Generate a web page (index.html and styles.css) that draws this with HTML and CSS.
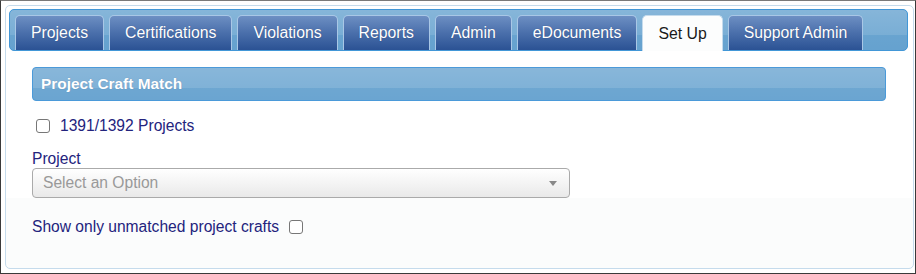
FILE: index.html
```html
<!DOCTYPE html>
<html lang="en">
<head>
<meta charset="utf-8">
<title>Project Craft Match</title>
<link rel="stylesheet" href="styles.css">
</head>
<body>
<div class="frame">
  <div class="tabs">
    <ul class="tab-nav">
      <li class="tab">Projects</li>
      <li class="tab">Certifications</li>
      <li class="tab">Violations</li>
      <li class="tab">Reports</li>
      <li class="tab">Admin</li>
      <li class="tab">eDocuments</li>
      <li class="tab active">Set Up</li>
      <li class="tab">Support Admin</li>
    </ul>
    <div class="panel">
      <div class="panel-header">Project Craft Match</div>
      <label class="check-row first">
        <input type="checkbox" class="checkbox">
        <span>1391/1392 Projects</span>
      </label>
      <div class="field-label">Project</div>
      <div class="select">
        <span class="placeholder">Select an Option</span>
        <span class="arrow"></span>
      </div>
      <label class="check-row second">
        <span>Show only unmatched project crafts</span>
        <input type="checkbox" class="checkbox">
      </label>
    </div>
  </div>
</div>
</body>
</html>
```
FILE: styles.css
```css
* { box-sizing: border-box; }

body {
  margin: 0;
  font-family: "Liberation Sans", Arial, sans-serif;
  background: #fff;
}

.frame {
  width: 916px;
  height: 274px;
  border: 1px solid #3a3a3a;
  border-top-color: #7a7a7a;
  padding: 4px 1px 4px 4px;
  background: #fff;
}

.tabs {
  height: 100%;
  border: 1px solid #c5dbec;
  border-radius: 5px;
  padding: 3px 5px 3px 3px;
  background: linear-gradient(#ffffff 192px, #fbfcfc 192px);
}

.tab-nav {
  display: flex;
  gap: 5px;
  margin: 0;
  padding: 5px 0 0 5px;
  list-style: none;
  height: 42px;
  border: 1px solid #4297d7;
  border-radius: 5px;
  background:
    linear-gradient(rgba(255,255,255,.26), rgba(255,255,255,.18) 62%, rgba(255,255,255,.08) 62%, rgba(255,255,255,.06)),
    #5c9ccc;
}

.tab {
  height: 35px;
  padding: 0 15px;
  display: flex;
  align-items: center;
  align-self: flex-start;
  border: 1px solid #a9c7e6;
  border-bottom: none;
  border-radius: 5px 5px 0 0;
  background: linear-gradient(#6d8fc3, #4a6fab 50%, #2b5294);
  color: #fff;
  font-size: 15.8px;
  text-shadow: 0 0 1px rgba(0, 0, 40, .35);
  white-space: nowrap;
}

.tab.active {
  height: 36px;
  background: #fcfdfd;
  border-color: #c5dbec;
  color: #1a1a1a;
  text-shadow: none;
}

.panel {
  padding: 16px 22px 0 23px;
}

.panel-header {
  height: 34px;
  display: flex;
  align-items: center;
  padding-left: 8px;
  border: 1px solid #4b9ad9;
  border-radius: 4px;
  background:
    linear-gradient(rgba(255,255,255,.27), rgba(255,255,255,.22) 62%, rgba(255,255,255,.11) 62%, rgba(255,255,255,.09)),
    #5c9ccc;
  color: #fff;
  font-weight: bold;
  font-size: 15.4px;
  text-shadow: 0 0 1px rgba(0, 0, 60, .25);
}

.check-row {
  display: flex;
  align-items: center;
  gap: 10px;
  height: 20px;
  color: #23237d;
  font-size: 15.6px;
}

.check-row.first {
  margin-top: 15px;
  padding-left: 4px;
}

.check-row.second {
  margin-top: 19px;
}

.checkbox {
  appearance: none;
  -webkit-appearance: none;
  margin: 0;
  width: 14px;
  height: 14px;
  border: 1px solid #777;
  border-radius: 3px;
  background: #fff;
  flex: none;
}

.field-label {
  margin-top: 14px;
  line-height: 18px;
  height: 18px;
  color: #23237d;
  font-size: 15.6px;
}

.select {
  width: 538px;
  height: 30px;
  display: flex;
  align-items: center;
  justify-content: space-between;
  padding: 0 12px 0 10px;
  border: 1px solid #aaa;
  border-radius: 4px;
  background: linear-gradient(#ffffff, #f4f4f4 50%, #e9e9e9);
}

.placeholder {
  color: #999;
  font-size: 15.6px;
}

.arrow {
  width: 0;
  height: 0;
  border-left: 4px solid transparent;
  border-right: 4px solid transparent;
  border-top: 5px solid #888;
}
```
